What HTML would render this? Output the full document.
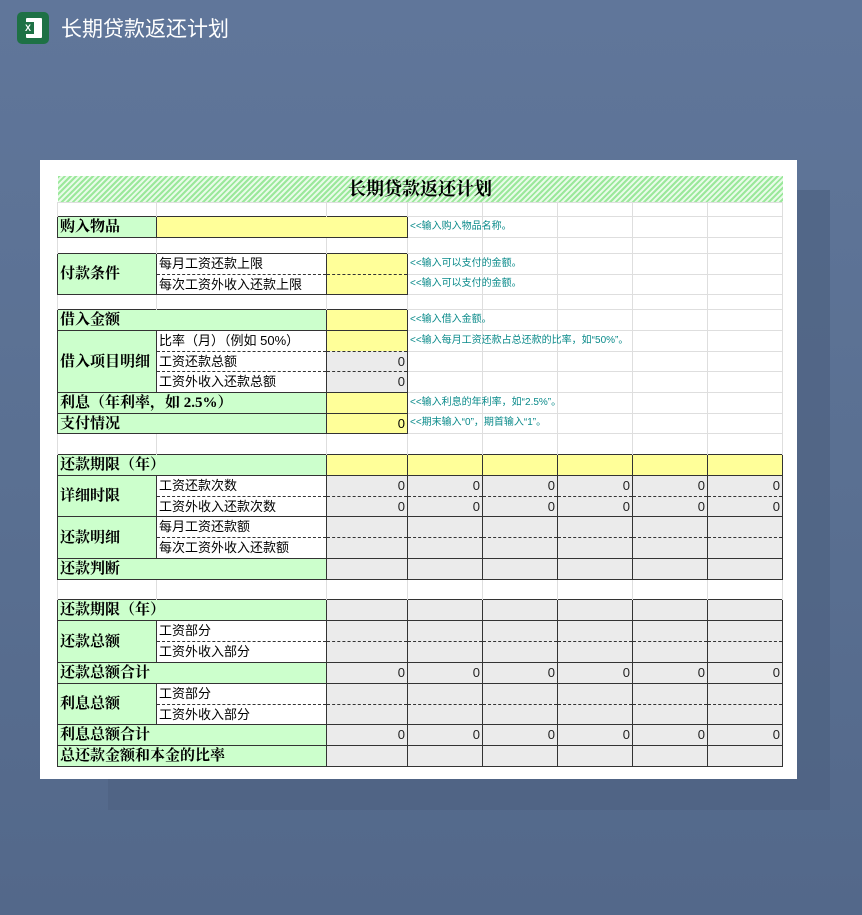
<!DOCTYPE html>
<html><head><meta charset="utf-8"><style>
body{margin:0;width:862px;height:915px;overflow:hidden;background:linear-gradient(180deg,#60769a 0%,#5a7092 50%,#53688a 100%);position:relative;font-family:"Liberation Sans","Noto Sans CJK SC",sans-serif}
.hdr{position:absolute;left:17px;top:12px;width:32px;height:32px;background:#1e7145;border-radius:5px}
.hdr .pg{position:absolute;left:9px;top:6px;width:16px;height:20px;background:#fff;border-radius:1px}
.hdr .x{position:absolute;left:5px;top:10px;width:12px;height:12px;background:#1e7145;color:#fff;font:bold 9px "Liberation Sans";text-align:center;line-height:12px}
.ttl{position:absolute;left:61px;top:18px;color:#fff;font-size:21px;line-height:24px}
.sh{position:absolute;left:108px;top:190px;width:722px;height:620px;background:#4e6282;opacity:.7}
.card{position:absolute;left:40px;top:160px;width:757px;height:619px;background:#fff}
table{position:absolute;left:57px;top:176px;width:725px;border-collapse:collapse;table-layout:fixed}
td{padding:0 2px;font-size:13px;white-space:nowrap;overflow:visible;line-height:1;color:#000}
.g{border:1px solid #dedede;border-bottom:none}
.b{border:1px solid #333}
.gr{background:#ccffcc;font-family:"Liberation Serif","Noto Serif CJK SC",serif;font-weight:bold;font-size:15px;padding-top:2px}
.y{background:#ffff99}
.p{background:#ebebeb;text-align:right;color:#222}
.d{border-bottom:1px dashed #333}
.n{border-top:none}
.h{color:#0a8a8a;font-size:10px;border:1px solid #dedede;border-right:none;border-bottom:none}
.t{background:repeating-linear-gradient(135deg,#9be89b 0 2px,#e8fbe8 2px 4px);text-align:center;font-family:"Liberation Serif","Noto Serif CJK SC",serif;font-weight:bold;font-size:18px}
</style></head><body>
<div class="hdr"><div class="pg"></div><div class="x">X</div></div>
<div class="ttl">长期贷款返还计划</div>
<div class="sh"></div>
<div class="card"></div>
<table>
<colgroup><col style="width:99px"><col style="width:170px"><col style="width:81px"><col style="width:75px"><col style="width:75px"><col style="width:75px"><col style="width:75px"><col style="width:75px"></colgroup>
<tr style="height:26px"><td colspan="8" class="t">长期贷款返还计划</td></tr>
<tr style="height:14px"><td class="g"></td><td class="g"></td><td class="g"></td><td class="g"></td><td class="g"></td><td class="g"></td><td class="g"></td><td class="g"></td></tr>
<tr style="height:21px"><td class="b gr">购入物品</td><td colspan="2" class="b y"></td><td class="h">&lt;&lt;输入购入物品名称。</td><td class="g"></td><td class="g"></td><td class="g"></td><td class="g"></td></tr>
<tr style="height:16px"><td class="g"></td><td class="g"></td><td class="g"></td><td class="g"></td><td class="g"></td><td class="g"></td><td class="g"></td><td class="g"></td></tr>
<tr style="height:21px"><td rowspan="2" class="b gr">付款条件</td><td class="b d">每月工资还款上限</td><td class="b y d"></td><td class="h">&lt;&lt;输入可以支付的金额。</td><td class="g"></td><td class="g"></td><td class="g"></td><td class="g"></td></tr>
<tr style="height:20px"><td class="b n">每次工资外收入还款上限</td><td class="b y n"></td><td class="h">&lt;&lt;输入可以支付的金额。</td><td class="g"></td><td class="g"></td><td class="g"></td><td class="g"></td></tr>
<tr style="height:15px"><td class="g"></td><td class="g"></td><td class="g"></td><td class="g"></td><td class="g"></td><td class="g"></td><td class="g"></td><td class="g"></td></tr>
<tr style="height:21px"><td colspan="2" class="b gr">借入金额</td><td class="b y"></td><td class="h">&lt;&lt;输入借入金额。</td><td class="g"></td><td class="g"></td><td class="g"></td><td class="g"></td></tr>
<tr style="height:21px"><td rowspan="3" class="b gr">借入项目明细</td><td class="b d">比率（月）（例如 50%）</td><td class="b y d"></td><td class="h">&lt;&lt;输入每月工资还款占总还款的比率，如“50%”。</td><td class="g"></td><td class="g"></td><td class="g"></td><td class="g"></td></tr>
<tr style="height:20px"><td class="b d n">工资还款总额</td><td class="b p d n">0</td><td class="g"></td><td class="g"></td><td class="g"></td><td class="g"></td><td class="g"></td></tr>
<tr style="height:21px"><td class="b n">工资外收入还款总额</td><td class="b p n">0</td><td class="g"></td><td class="g"></td><td class="g"></td><td class="g"></td><td class="g"></td></tr>
<tr style="height:21px"><td colspan="2" class="b gr">利息（年利率，如 2.5%）</td><td class="b y"></td><td class="h">&lt;&lt;输入利息的年利率，如“2.5%”。</td><td class="g"></td><td class="g"></td><td class="g"></td><td class="g"></td></tr>
<tr style="height:20px"><td colspan="2" class="b gr">支付情况</td><td class="b y" style="text-align:right">0</td><td class="h">&lt;&lt;期末输入“0”，期首输入“1”。</td><td class="g"></td><td class="g"></td><td class="g"></td><td class="g"></td></tr>
<tr style="height:21px"><td class="g"></td><td class="g"></td><td class="g"></td><td class="g"></td><td class="g"></td><td class="g"></td><td class="g"></td><td class="g"></td></tr>
<tr style="height:21px"><td colspan="2" class="b gr">还款期限（年）</td><td class="b y"></td><td class="b y"></td><td class="b y"></td><td class="b y"></td><td class="b y"></td><td class="b y"></td></tr>
<tr style="height:21px"><td rowspan="2" class="b gr">详细时限</td><td class="b d">工资还款次数</td><td class="b p d">0</td><td class="b p d">0</td><td class="b p d">0</td><td class="b p d">0</td><td class="b p d">0</td><td class="b p d">0</td></tr>
<tr style="height:20px"><td class="b n">工资外收入还款次数</td><td class="b p n">0</td><td class="b p n">0</td><td class="b p n">0</td><td class="b p n">0</td><td class="b p n">0</td><td class="b p n">0</td></tr>
<tr style="height:21px"><td rowspan="2" class="b gr">还款明细</td><td class="b d">每月工资还款额</td><td class="b p d"></td><td class="b p d"></td><td class="b p d"></td><td class="b p d"></td><td class="b p d"></td><td class="b p d"></td></tr>
<tr style="height:21px"><td class="b n">每次工资外收入还款额</td><td class="b p n"></td><td class="b p n"></td><td class="b p n"></td><td class="b p n"></td><td class="b p n"></td><td class="b p n"></td></tr>
<tr style="height:21px"><td colspan="2" class="b gr">还款判断</td><td class="b p"></td><td class="b p"></td><td class="b p"></td><td class="b p"></td><td class="b p"></td><td class="b p"></td></tr>
<tr style="height:20px"><td class="g"></td><td class="g"></td><td class="g"></td><td class="g"></td><td class="g"></td><td class="g"></td><td class="g"></td><td class="g"></td></tr>
<tr style="height:21px"><td colspan="2" class="b gr">还款期限（年）</td><td class="b p"></td><td class="b p"></td><td class="b p"></td><td class="b p"></td><td class="b p"></td><td class="b p"></td></tr>
<tr style="height:21px"><td rowspan="2" class="b gr">还款总额</td><td class="b d">工资部分</td><td class="b p d"></td><td class="b p d"></td><td class="b p d"></td><td class="b p d"></td><td class="b p d"></td><td class="b p d"></td></tr>
<tr style="height:21px"><td class="b n">工资外收入部分</td><td class="b p n"></td><td class="b p n"></td><td class="b p n"></td><td class="b p n"></td><td class="b p n"></td><td class="b p n"></td></tr>
<tr style="height:21px"><td colspan="2" class="b gr">还款总额合计</td><td class="b p">0</td><td class="b p">0</td><td class="b p">0</td><td class="b p">0</td><td class="b p">0</td><td class="b p">0</td></tr>
<tr style="height:21px"><td rowspan="2" class="b gr">利息总额</td><td class="b d">工资部分</td><td class="b p d"></td><td class="b p d"></td><td class="b p d"></td><td class="b p d"></td><td class="b p d"></td><td class="b p d"></td></tr>
<tr style="height:20px"><td class="b n">工资外收入部分</td><td class="b p n"></td><td class="b p n"></td><td class="b p n"></td><td class="b p n"></td><td class="b p n"></td><td class="b p n"></td></tr>
<tr style="height:21px"><td colspan="2" class="b gr">利息总额合计</td><td class="b p">0</td><td class="b p">0</td><td class="b p">0</td><td class="b p">0</td><td class="b p">0</td><td class="b p">0</td></tr>
<tr style="height:21px"><td colspan="2" class="b gr">总还款金额和本金的比率</td><td class="b p"></td><td class="b p"></td><td class="b p"></td><td class="b p"></td><td class="b p"></td><td class="b p"></td></tr>
</table>
</body></html>
